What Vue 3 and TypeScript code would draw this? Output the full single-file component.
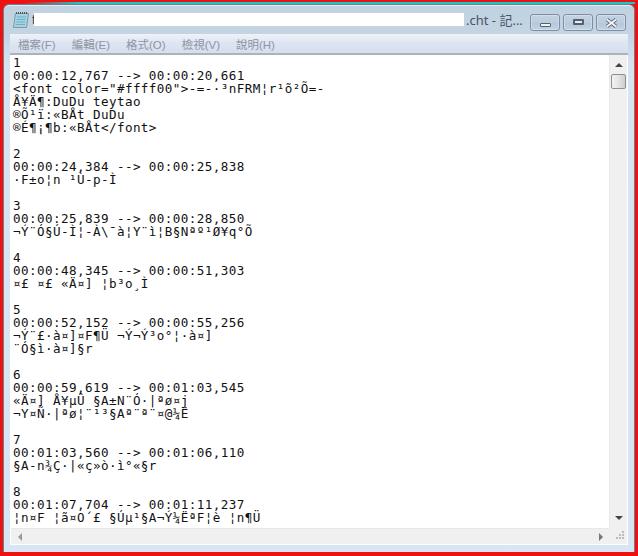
<script setup lang="ts">
const menus = ['檔案(F)', '編輯(E)', '格式(O)', '檢視(V)', '說明(H)']
const text = `1
00:00:12,767 --> 00:00:20,661
<font color="#ffff00">-=-·³nFRM¦r¹õ²Õ=-
Å¥Ä¶:DuDu teytao
®Õ¹ï:«BÅt DuDu
®É¶¡¶b:«BÅt</font>

2
00:00:24,384 --> 00:00:25,838
·F±o¦n ¹Ù-p-Ì

3
00:00:25,839 --> 00:00:28,850
¬Ý¨Ó§Ú-Ì¦-À\\¯à¦Y¨ì¦B§Nªº¹Ø¥q°Õ

4
00:00:48,345 --> 00:00:51,303
¤£ ¤£ «Ä¤] ¦b³o¸Ì

5
00:00:52,152 --> 00:00:55,256
¬Ý¨£·à¤]¤F¶Ü ¬Ý¬Ý³o°¦·à¤]
¨Ó§ì·à¤]§r

6
00:00:59,619 --> 00:01:03,545
«Ä¤] Å¥µÛ §A±N¨Ó·|ªø¤j
¬Y¤Ñ·|ªø¦¨¹³§Aª¨ª¨¤@¼Ë

7
00:01:03,560 --> 00:01:06,110
§A-n¾Ç·|«ç»ò·ì°«§r

8
00:01:07,704 --> 00:01:11,237
¦n¤F ¦ã¤O´£ §Úµ¹§A¬Ý¼ËªF¦è ¦n¶Ü`
</script>

<template>
  <div class="frame">
    <div class="strip"></div>
    <div class="window">
      <div class="titlebar">
        <svg class="appicon" width="16" height="16" viewBox="0 0 16 16">
          <path d="M2.500 1.500H15.500L13.500 15.500H.5z" fill="#a4d4e2" stroke="#7d98a8" />
          <path d="M4 5h9M3.600 7.500h9M3.200 10h9M2.900 12.500h9" stroke="#6fb0c6" />
          <path d="M3.500 2V0M5.500 2V0M7.500 2V0M9.500 2V0M11.500 2V0M13.500 2V0" stroke="#555" />
        </svg>
        <span class="tchar">f</span>
        <div class="redact"></div>
        <span class="title">.cht - 記...</span>
        <div class="caps">
          <div class="cap">
            <span class="min"></span>
          </div>
          <div class="cap">
            <span class="max"></span>
          </div>
          <div class="cap">
            <svg width="13" height="10" viewBox="0 0 13 10">
              <path d="M2 1.500 6.500 5 11 1.500M2 8.500 6.500 5 11 8.500" fill="none" stroke="#5c6675" stroke-width="3.600" />
              <path d="M2 1.500 6.500 5 11 1.500M2 8.500 6.500 5 11 8.500" fill="none" stroke="#f4f6f8" stroke-width="1.800" />
            </svg>
          </div>
        </div>
      </div>
      <div class="client">
        <div class="menubar">
          <span v-for="m in menus" :key="m" class="menu">{{ m }}</span>
        </div>
        <div class="editor">
          <pre class="text">{{ text }}</pre>
          <div class="vscroll">
            <span class="arrow up"></span>
            <span class="thumb"></span>
            <span class="fill"></span>
            <span class="arrow down"></span>
          </div>
        </div>
        <div class="bottom">
          <div class="hscroll">
            <span class="arrow left"></span>
            <span class="arrow right"></span>
          </div>
          <div class="grip">
            <svg width="17" height="16" viewBox="0 0 17 16">
              <path d="M12 3h2v2h-2zM9 6h2v2H9zM12 6h2v2h-2zM6 9h2v2H6zM9 9h2v2H9zM12 9h2v2h-2z" fill="#b9bcc0" />
            </svg>
          </div>
        </div>
      </div>
    </div>
  </div>
</template>

<style>
html, body { margin: 0; background: #f00; }
</style>

<style scoped>
.frame {
  width: 638px;
  height: 556px;
  box-sizing: border-box;
  padding: 2px 3px 4px 3px;
  background: #ee1111;
  display: flex;
  flex-direction: column;
  font-family: "Liberation Sans", "Noto Sans CJK TC", sans-serif;
}
.strip {
  height: 2px;
  flex: none;
  background: linear-gradient(90deg, #ee1111 0, #ee1111 3%, #18c8c8 12%, #18c8c8 100%);
}
.window {
  flex: 1;
  min-height: 0;
  box-sizing: border-box;
  padding: 0 6px 7px 6px;
  display: flex;
  flex-direction: column;
  background: linear-gradient(180deg, #c0d2e0 0, #c4d4e3 30px, #d6e4f1 60px, #d8e5f2 100%);
  border: 1px solid #6f7f8c;
  border-bottom: 0;
  border-radius: 6px 6px 0 0;
  box-shadow: inset 0 1px 0 #e4ecf2;
}
.titlebar {
  height: 29px;
  flex: none;
  display: flex;
  align-items: center;
}
.appicon { margin-left: 3px; flex: none; }
.tchar { width: 2px; font-size: 12px; color: #333; margin-left: 3px; overflow: hidden; }
.redact { width: 430px; height: 13px; background: #fff; flex: none; }
.title {
  margin-left: 2px;
  font-family: "Noto Sans", "Noto Sans CJK TC", sans-serif;
  font-size: 13px;
  color: #4a5564;
  white-space: nowrap;
}
.caps {
  margin-left: auto;
  display: flex;
  gap: 3px;
  margin-right: 2px;
  align-self: flex-end;
  margin-bottom: 3px;
}
.cap {
  width: 28px;
  height: 15px;
  border: 1px solid #7f8fa3;
  border-radius: 3px;
  background: linear-gradient(180deg, #c4d2e1 0, #bccde0 50%, #b4c6d9 51%, #c2d3e4 100%);
  display: flex;
  align-items: center;
  justify-content: center;
  box-shadow: inset 0 0 0 1px rgba(255,255,255,.3);
}
.min {
  width: 9px;
  height: 2px;
  margin-top: 4px;
  border: 1px solid #555f6e;
  background: #f2f4f6;
  border-radius: 1px;
}
.max {
  width: 7px;
  height: 2px;
  margin-top: -1px;
  border: 2px solid #555f6e;
  background: #e8ecf0;
  border-radius: 1px;
}
.client {
  flex: 1;
  min-height: 0;
  display: flex;
  flex-direction: column;
  background: #fff;
}
.menubar {
  height: 19px;
  flex: none;
  display: flex;
  align-items: center;
  padding-left: 8px;
  gap: 16px;
  font-size: 11.5px;
  color: #8d95a3;
  background: linear-gradient(180deg, #eef2f9 0, #dde4f2 50%, #d7dfef 100%);
  border-bottom: 2px solid #aeb3bb;
}
.menu { white-space: nowrap; }
.editor {
  flex: 1;
  min-height: 0;
  display: flex;
  overflow: hidden;
  padding-right: 1px;
}
.text {
  flex: 1;
  margin: 0;
  padding: 1px 0 0 3px;
  font-family: "DejaVu Sans Mono", monospace;
  font-size: 12.6px;
  letter-spacing: 0.41px;
  line-height: 13px;
  color: #111;
  overflow: hidden;
}
.vscroll {
  width: 18px;
  flex: none;
  display: flex;
  flex-direction: column;
  align-items: center;
  background: #f0f0f0;
  border-left: 1px solid #e8e8e8;
  box-sizing: border-box;
}
.fill { flex: 1; }
.thumb {
  width: 15px;
  height: 15px;
  flex: none;
  box-sizing: border-box;
  border: 1px solid #8e8f8f;
  border-radius: 2px;
  background: linear-gradient(90deg, #f3f3f3 0, #e3e3e3 50%, #cfcfcf 100%);
}
.arrow { width: 0; height: 0; border-style: solid; flex: none; }
.up {
  margin: 8px 0 7px;
  border-width: 0 4px 4px;
  border-color: transparent transparent #444;
}
.down {
  margin: 7px 0 8px;
  border-width: 4px 4px 0;
  border-color: #444 transparent transparent;
}
.bottom {
  height: 16px;
  flex: none;
  display: flex;
  margin: 0 1px 1px;
  background: #f0f0f0;
}
.hscroll {
  flex: 1;
  display: flex;
  align-items: center;
  justify-content: space-between;
  padding: 0 7px;
  border-top: 1px solid #e8e8e8;
}
.left { border-width: 4px 4px 4px 0; border-color: transparent #999 transparent transparent; }
.right { border-width: 4px 0 4px 4px; border-color: transparent transparent transparent #777; }
.grip { width: 17px; height: 16px; background: #f0f0f0; }
</style>
